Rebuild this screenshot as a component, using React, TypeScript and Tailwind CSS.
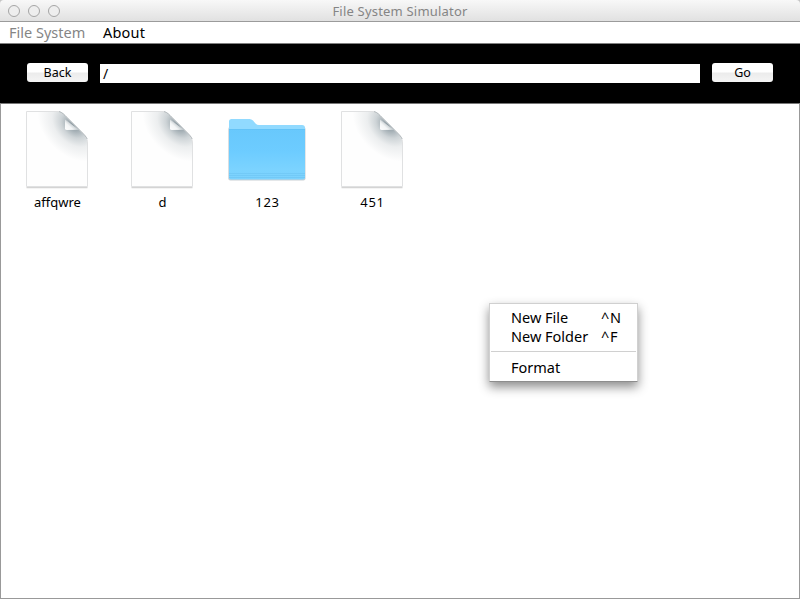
import React from "react";

function FileIcon({ id }: { id: string }) {
  return (
    <svg width="73" height="82" viewBox="0 0 73 82" className="block">
      <defs>
        <radialGradient
          id={`shade-${id}`}
          gradientUnits="userSpaceOnUse"
          cx="0"
          cy="0"
          r="1"
          gradientTransform="translate(53 18) rotate(45) scale(42 30)"
        >
          <stop offset="0" stopColor="#84929a" />
          <stop offset="0.16" stopColor="#a3aeb4" />
          <stop offset="0.36" stopColor="#ced4d7" />
          <stop offset="0.6" stopColor="#eceeef" />
          <stop offset="1" stopColor="#fefefe" />
        </radialGradient>
        <linearGradient id={`curl-${id}`} gradientUnits="userSpaceOnUse" x1="44" y1="24" x2="51" y2="16">
          <stop offset="0" stopColor="#ffffff" />
          <stop offset="0.6" stopColor="#f3f5f6" />
          <stop offset="1" stopColor="#bcc4c8" />
        </linearGradient>
      </defs>
      <path d="M5.500 80.500H66.500" fill="none" stroke="#d4d4d4" strokeWidth="1.500" />
      <path d="M5.500 4.500H37C41 5 43 7.500 46 10.500L60.500 25C64 28.500 66.500 31 66.500 36V79.500H5.500Z" fill={`url(#shade-${id})`} stroke="#dddedf" strokeWidth="0.9" />
      <path d="M38 4.500C41.500 5.500 43 7.500 46 10.500L60.500 25C63.500 28 65.500 30 66.200 32" fill="none" stroke="#a5adb1" strokeWidth="0.8" />
      <path d="M44 12.500V21.500Q44 23 46 23L58 22.800Z" fill={`url(#curl-${id})`} />
    </svg>
  );
}

function FolderIcon() {
  return (
    <svg width="83" height="82" viewBox="0 0 83 82" className="block">
      <defs>
        <linearGradient id="folder-front" x1="0" y1="0" x2="0" y2="1">
          <stop offset="0" stopColor="#68c8fc" />
          <stop offset="0.45" stopColor="#6dccff" />
          <stop offset="0.8" stopColor="#7bd3ff" />
          <stop offset="1" stopColor="#7dd2fd" />
        </linearGradient>
      </defs>
      <rect x="2.300" y="20" width="77.200" height="53.500" rx="2" fill="#c9d0d4" />
      <path d="M3 24V14.500Q3 12 5.500 12H23.500Q25.500 12 27 13.500L29.500 16.500Q31 18 33 18H76Q79 18 79 21V24Z" fill="#91daff" />
      <path d="M3 22H79V70.500Q79 72.500 77 72.500H5Q3 72.500 3 70.500Z" fill="url(#folder-front)" />
      <path d="M3 22.500H79" stroke="#62c2f5" strokeWidth="0.7" />
      <path d="M3 66.500H79M3 68.500H79M3 70.500H79" stroke="#68c0f0" strokeWidth="0.5" />
    </svg>
  );
}

const entries = [
  { name: "affqwre", folder: false, tracking: "" },
  { name: "d", folder: false, tracking: "" },
  { name: "123", folder: true, tracking: "tracking-[0.7px]" },
  { name: "451", folder: false, tracking: "tracking-[0.7px]" },
];

function PushButton({ children }: { children: React.ReactNode }) {
  return (
    <button className="flex h-[19px] w-[61px] items-center justify-center rounded-[3px] bg-linear-to-b from-white from-45% via-[#ececec] via-55% to-[#f5f5f5] text-[12.5px] leading-[19px] text-black">
      {children}
    </button>
  );
}

export default function App() {
  return (
    <div className="relative flex h-[600px] w-[800px] flex-col overflow-hidden bg-white font-['Noto_Sans','Open_Sans',sans-serif] text-black">
      <div className="shrink-0 bg-[#c4c4c4]">
        <header className="relative flex h-[22px] items-center justify-center rounded-t-[4px] border-b border-[#9b9b9b] bg-linear-to-b from-[#f8f8f8] to-[#e1e1e1]">
          <svg width="60" height="21" viewBox="0 0 60 21" className="absolute left-1 top-0">
            {[10, 30, 50].map((x) => (
              <circle key={x} cx={x} cy="11" r="5.500" fill="#eeeeee" stroke="#a5a5a5" />
            ))}
          </svg>
          <h1 className="text-[13px] leading-[22px] tracking-[0.2px] text-[#858585]">File System Simulator</h1>
        </header>
      </div>
      <nav className="flex h-[22px] shrink-0 items-center border-b border-[#808080] bg-white pl-[9px] text-[14.5px] leading-[21px]">
        <span className="w-[94px] text-[#858585]">File System</span>
        <span className="tracking-[0.2px]">About</span>
      </nav>
      <div className="flex h-[59px] shrink-0 items-start bg-black pl-[27px] pt-[19px]">
        <PushButton>Back</PushButton>
        <div className="ml-3 mr-3 mt-px h-[19px] w-[600px] bg-white pl-[3px] text-[14px] leading-[20px]">/</div>
        <PushButton>Go</PushButton>
      </div>
      <main className="mb-px flex flex-1 items-start border border-[#999999] border-t-[#777777] bg-white pl-[4px] pt-[3px]">
        {entries.map((entry) => (
          <div key={entry.name} className="flex w-[105px] flex-col items-center">
            {entry.folder ? <FolderIcon /> : <FileIcon id={entry.name} />}
            <span className={`mt-[4px] text-[13px] leading-[18px] ${entry.tracking}`}>{entry.name}</span>
          </div>
        ))}
      </main>
      <div className="absolute left-[489px] top-[303px] flex h-[79px] w-[149px] flex-col border border-[#d0d0d0] border-b-[#8d8d8d] bg-white pt-[4px] text-[14.5px] leading-[19px] shadow-[0_5px_10px_rgba(0,0,0,0.45)]">
        <div className="flex h-[19px] pl-[21px]">
          <span className="w-[90px]">New File</span>
          <span className="tracking-[0.6px]">^N</span>
        </div>
        <div className="flex h-[19px] pl-[21px]">
          <span className="w-[90px]">New Folder</span>
          <span className="tracking-[0.6px]">^F</span>
        </div>
        <div className="mx-px mb-[6px] mt-[5px] h-px bg-[#d0d0d0]" />
        <div className="h-[19px] pl-[21px]">Format</div>
      </div>
    </div>
  );
}
